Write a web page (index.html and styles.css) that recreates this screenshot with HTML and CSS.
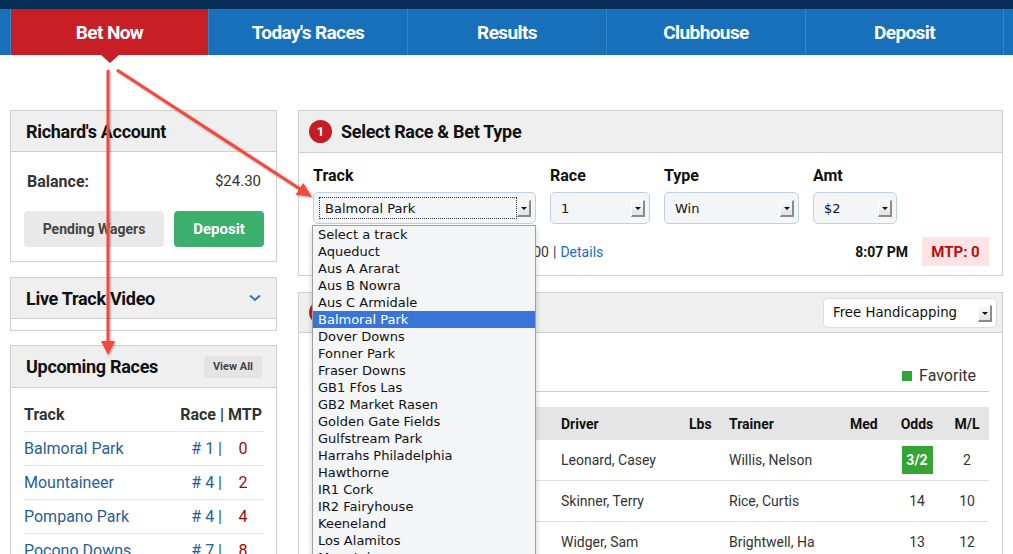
FILE: index.html
```html
<!DOCTYPE html>
<html>
<head>
<meta charset="utf-8">
<link rel="stylesheet" href="styles.css">
</head>
<body>
<div class="topbar"></div>
<nav class="nav">
  <a class="nav-item active">Bet Now</a>
  <a class="nav-item">Today's Races</a>
  <a class="nav-item">Results</a>
  <a class="nav-item">Clubhouse</a>
  <a class="nav-item">Deposit</a>
</nav>
<main class="main">
  <aside class="sidebar">
    <section class="card">
      <header class="card-head">Richard's Account</header>
      <div class="account-body">
        <div class="balance"><span class="balance-label">Balance:</span><span>$24.30</span></div>
        <div class="account-actions">
          <button class="btn btn-gray">Pending Wagers</button>
          <button class="btn btn-green">Deposit</button>
        </div>
      </div>
    </section>
    <section class="card card-gap">
      <header class="card-head">Live Track Video
        <svg class="chevron" width="12" height="8" viewBox="0 0 12 8"><path d="M1 1.5 L6 6 L11 1.5" fill="none" stroke="#2e75bf" stroke-width="2"/></svg>
      </header>
      <div class="video-body"></div>
    </section>
    <section class="card card-gap-2">
      <header class="card-head card-head-tall">Upcoming Races <span class="view-all">View All</span></header>
      <div class="upcoming-body">
        <div class="up-row up-head"><span>Track</span><span class="up-rm">Race | MTP</span></div>
        <div class="up-row"><a class="up-track">Balmoral Park</a><span class="up-race"># 1 |</span><span class="up-mtp">0</span></div>
        <div class="up-row"><a class="up-track">Mountaineer</a><span class="up-race"># 4 |</span><span class="up-mtp">2</span></div>
        <div class="up-row"><a class="up-track">Pompano Park</a><span class="up-race"># 4 |</span><span class="up-mtp">4</span></div>
        <div class="up-row"><a class="up-track">Pocono Downs</a><span class="up-race"># 7 |</span><span class="up-mtp">8</span></div>
      </div>
    </section>
  </aside>
  <div class="content">
    <section class="panel">
      <header class="panel-head"><span class="step">1</span>Select Race &amp; Bet Type</header>
      <div class="select-body">
        <div class="fields">
          <div class="field field-track">
            <label class="field-label">Track</label>
            <div class="sel"><span class="focus-ring">Balmoral Park</span><span class="sel-arrow"></span></div>
            <ul class="dropdown">
              <li>Select a track</li>
              <li>Aqueduct</li>
              <li>Aus A Ararat</li>
              <li>Aus B Nowra</li>
              <li>Aus C Armidale</li>
              <li class="selected">Balmoral Park</li>
              <li>Dover Downs</li>
              <li>Fonner Park</li>
              <li>Fraser Downs</li>
              <li>GB1 Ffos Las</li>
              <li>GB2 Market Rasen</li>
              <li>Golden Gate Fields</li>
              <li>Gulfstream Park</li>
              <li>Harrahs Philadelphia</li>
              <li>Hawthorne</li>
              <li>IR1 Cork</li>
              <li>IR2 Fairyhouse</li>
              <li>Keeneland</li>
              <li>Los Alamitos</li>
              <li>Mountaineer</li>
            </ul>
          </div>
          <div class="field field-race">
            <label class="field-label">Race</label>
            <div class="sel"><span>1</span><span class="sel-arrow"></span></div>
          </div>
          <div class="field field-type">
            <label class="field-label">Type</label>
            <div class="sel"><span>Win</span><span class="sel-arrow"></span></div>
          </div>
          <div class="field field-amt">
            <label class="field-label">Amt</label>
            <div class="sel"><span>$2</span><span class="sel-arrow"></span></div>
          </div>
        </div>
        <div class="race-info">
          <span class="purse">Pace | Purse: $10,000</span><span class="sep">|</span><a class="details">Details</a>
          <span class="post-time">8:07 PM</span>
          <span class="mtp">MTP: 0</span>
        </div>
      </div>
    </section>
    <section class="panel panel-gap">
      <header class="panel-head panel-head-2"><span class="step">2</span>Select Runners
        <div class="sel sel-white"><span>Free Handicapping</span><span class="sel-arrow"></span></div>
      </header>
      <div class="entries-body">
        <div class="legend"><span class="fav-box"></span>Favorite</div>
        <div class="entries">
          <div class="e-row e-head"><span>#</span><span>Horse</span><span>Driver</span><span>Lbs</span><span>Trainer</span><span>Med</span><span class="c">Odds</span><span class="c">M/L</span></div>
          <div class="e-row"><span>1</span><span>Rockin Rollo</span><span>Leonard, Casey</span><span></span><span>Willis, Nelson</span><span></span><span class="c"><b class="fav-odds">3/2</b></span><span class="c">2</span></div>
          <div class="e-row"><span>2</span><span>Shes A Tiger</span><span>Skinner, Terry</span><span></span><span>Rice, Curtis</span><span></span><span class="c">14</span><span class="c">10</span></div>
          <div class="e-row"><span>3</span><span>Darlin Danny</span><span>Widger, Sam</span><span></span><span>Brightwell, Ha</span><span></span><span class="c">13</span><span class="c">12</span></div>
        </div>
      </div>
    </section>
  </div>
</main>
<svg class="annotations" width="1013" height="554" viewBox="0 0 1013 554">
  <defs>
    <filter id="sh" x="-10%" y="-10%" width="120%" height="120%">
      <feDropShadow dx="1" dy="1" stdDeviation="1" flood-color="#000" flood-opacity="0.35"/>
    </filter>
  </defs>
  <g filter="url(#sh)" fill="#f24a3e" stroke="#f24a3e">
    <line x1="108" y1="70" x2="108" y2="343" stroke-width="3"/>
    <polygon points="101,341 115,341 108,355" stroke="none"/>
    <line x1="117" y1="70" x2="300" y2="189" stroke-width="3"/>
    <polygon points="295.6,194.7 303.2,182.9 312,197" stroke="none"/>
  </g>
</svg>
</body>
</html>
```

FILE: styles.css
```css
* { box-sizing: border-box; margin: 0; padding: 0; }
body {
  margin: 0;
  width: 1013px;
  height: 554px;
  overflow: hidden;
  position: relative;
  font-family: Roboto, "Liberation Sans", sans-serif;
  color: #222;
  background: #fff;
}
a { text-decoration: none; }

.topbar { height: 9px; background: #072e57; }

.nav { display: flex; height: 46px; background: #1870ba; padding-left: 10px; }
.nav-item {
  width: 199px;
  border-left: 1px solid #3a85c6;
  color: #fff;
  font-weight: 700;
  font-size: 19px;
  letter-spacing: -0.6px;
  display: flex;
  align-items: center;
  justify-content: center;
  position: relative;
}
.nav-item:first-child { width: 198px; }
.nav-item:last-child { border-right: 1px solid #3a85c6; }
.nav-item.active { background: #c81f26; }
.nav-item.active::after {
  content: "";
  position: absolute;
  left: 50%;
  top: 100%;
  margin-left: -9px;
  border-left: 9px solid transparent;
  border-right: 9px solid transparent;
  border-top: 8px solid #c81f26;
}

.main { display: flex; gap: 21px; padding: 55px 10px 0; }
.sidebar { width: 267px; flex: none; }
.content { width: 705px; flex: none; }

.card { border: 1px solid #cfcfcf; background: #fff; }
.card-gap { margin-top: 15px; }
.card-gap-2 { margin-top: 14px; }
.card-head {
  height: 41px;
  background: #efefef;
  border-bottom: 1px solid #cfcfcf;
  padding: 0 15px;
  display: flex;
  align-items: center;
  justify-content: space-between;
  font-size: 18px;
  font-weight: 700;
  color: #111;
  letter-spacing: -0.3px;
}
.card-head-tall { height: 42px; }

.account-body { padding: 19px 12px 14px 13px; }
.balance {
  display: flex;
  justify-content: space-between;
  align-items: center;
  height: 20px;
  padding: 0 3px;
  font-size: 15px;
  color: #333;
}
.balance-label { font-weight: 700; font-size: 16px; }
.account-actions { display: flex; gap: 10px; margin-top: 20px; }
.btn {
  height: 36px;
  border: none;
  border-radius: 4px;
  font-family: inherit;
  font-weight: 700;
  font-size: 14px;
}
.btn-gray { width: 140px; background: #e9e9e9; color: #444; }
.btn-green { width: 90px; background: #3daf6c; color: #fff; font-size: 15px; }

.video-body { height: 11px; }

.view-all {
  background: #e4e4e4;
  border-radius: 3px;
  font-size: 11px;
  font-weight: 700;
  color: #444;
  padding: 0 9px;
  height: 22px;
  line-height: 22px;
  letter-spacing: 0;
  margin-right: -1px;
}

.upcoming-body { padding: 10px 12px 0 13px; }
.up-row {
  display: grid;
  grid-template-columns: 1fr 60px 42px;
  align-items: center;
  height: 34px;
  border-bottom: 1px solid #e6e6e6;
  font-size: 16px;
}
.up-head { font-weight: 700; color: #333; }
.up-head .up-rm { grid-column: 2 / 4; text-align: right; padding-right: 2px; }
.up-track { color: #255f99; }
.up-race { color: #255f99; text-align: right; }
.up-mtp { color: #9b0a0a; text-align: center; }

.panel { border: 1px solid #cfcfcf; background: #fff; }
.panel-gap { margin-top: 16px; }
.panel-head {
  height: 42px;
  background: #efefef;
  border-bottom: 1px solid #cfcfcf;
  padding: 0 5px 0 10px;
  display: flex;
  align-items: center;
  font-size: 18px;
  font-weight: 700;
  color: #111;
  letter-spacing: -0.3px;
}
.panel-head-2 { height: 40px; }
.step {
  width: 23px;
  height: 23px;
  border-radius: 50%;
  background: #c41e24;
  color: #fff;
  font-size: 13px;
  display: flex;
  align-items: center;
  justify-content: center;
  margin-right: 9px;
  letter-spacing: 0;
}

.select-body { padding: 13px 13px 9px 14px; }
.fields { display: flex; gap: 14px; }
.field { position: relative; }
.field-label { display: block; height: 20px; line-height: 20px; font-size: 16px; font-weight: 700; color: #111; margin-bottom: 6px; }
.field-track { width: 223px; }
.field-race { width: 100px; }
.field-type { width: 135px; }
.field-amt { width: 84px; }

.sel {
  position: relative;
  height: 32px;
  border: 1px solid #bfd2e3;
  border-radius: 5px;
  background: #f4f5f7;
  font-family: "DejaVu Sans", sans-serif;
  font-size: 13px;
  color: #111;
  display: flex;
  align-items: center;
  padding-left: 10px;
}
.focus-ring {
  position: absolute;
  left: 5px;
  top: 4px;
  right: 18px;
  bottom: 4px;
  border: 1px dotted #333;
  padding-left: 5px;
  display: flex;
  align-items: center;
}
.sel-arrow {
  position: absolute;
  right: 4px;
  top: 50%;
  margin-top: -8px;
  width: 14px;
  height: 17px;
  background: linear-gradient(#fafafa, #e4e4e4);
  border-right: 2px solid #8a8a8a;
  border-bottom: 2px solid #8a8a8a;
  border-top: 1px solid #fff;
  border-left: 1px solid #fff;
}
.sel-arrow::after {
  content: "";
  position: absolute;
  left: 3px;
  top: 6px;
  border-left: 3px solid transparent;
  border-right: 3px solid transparent;
  border-top: 3px solid #111;
}

.dropdown {
  position: absolute;
  left: -1px;
  top: 59px;
  width: 224px;
  list-style: none;
  background: #f4f5f7;
  border: 1px solid #a0a0a0;
  box-shadow: 0 3px 6px rgba(0,0,0,0.2);
  font-family: "DejaVu Sans", sans-serif;
  font-size: 13px;
  color: #111;
  z-index: 10;
}
.dropdown li { height: 17px; line-height: 17px; padding-left: 5px; white-space: nowrap; }
.dropdown li.selected { background: #3875d7; color: #fff; }

.race-info {
  display: flex;
  align-items: center;
  height: 29px;
  margin-top: 13px;
  font-size: 14px;
  color: #333;
}
.purse { width: 236px; text-align: right; white-space: nowrap; overflow: hidden; }
.sep { margin: 0 4px; }
.details { color: #1a6fbd; }
.post-time { margin-left: auto; font-weight: 700; color: #111; margin-right: 14px; }
.mtp {
  width: 67px;
  height: 29px;
  background: #fde3e3;
  color: #b01016;
  font-weight: 700;
  font-size: 15px;
  display: flex;
  align-items: center;
  justify-content: center;
}

.sel-white {
  margin-left: auto;
  width: 174px;
  height: 30px;
  background: #fff;
  border-color: #ddd;
  font-weight: 400;
  font-size: 13.3px;
  letter-spacing: 0;
  padding-left: 9px;
}

.entries-body { padding: 0 13px 0 14px; }
.legend {
  height: 59px;
  border-bottom: 1px solid #ccc;
  display: flex;
  align-items: flex-end;
  justify-content: flex-end;
  padding: 0 13px 6px 0;
  font-size: 16px;
  color: #333;
}
.fav-box { width: 10px; height: 10px; background: #31a531; margin: 0 7px 4px 0; }
.entries { margin-top: 15px; }
.e-row {
  display: grid;
  grid-template-columns: 37px 203px 128px 40px 121px 47px 56px 44px;
  align-items: center;
  height: 41px;
  border-bottom: 1px solid #ddd;
  font-size: 14px;
  color: #333;
}
.e-row span { padding-left: 8px; white-space: nowrap; overflow: hidden; }
.e-row span.c { padding-left: 0; text-align: center; }
.e-head { height: 33px; background: #e5e5e5; border-bottom: none; font-size: 14px; font-weight: 700; color: #111; }
.fav-odds {
  display: inline-flex;
  width: 31px;
  height: 28px;
  align-items: center;
  justify-content: center;
  background: #34a532;
  color: #fff;
  font-size: 14px;
}

.annotations { position: absolute; left: 0; top: 0; pointer-events: none; z-index: 20; }
```
